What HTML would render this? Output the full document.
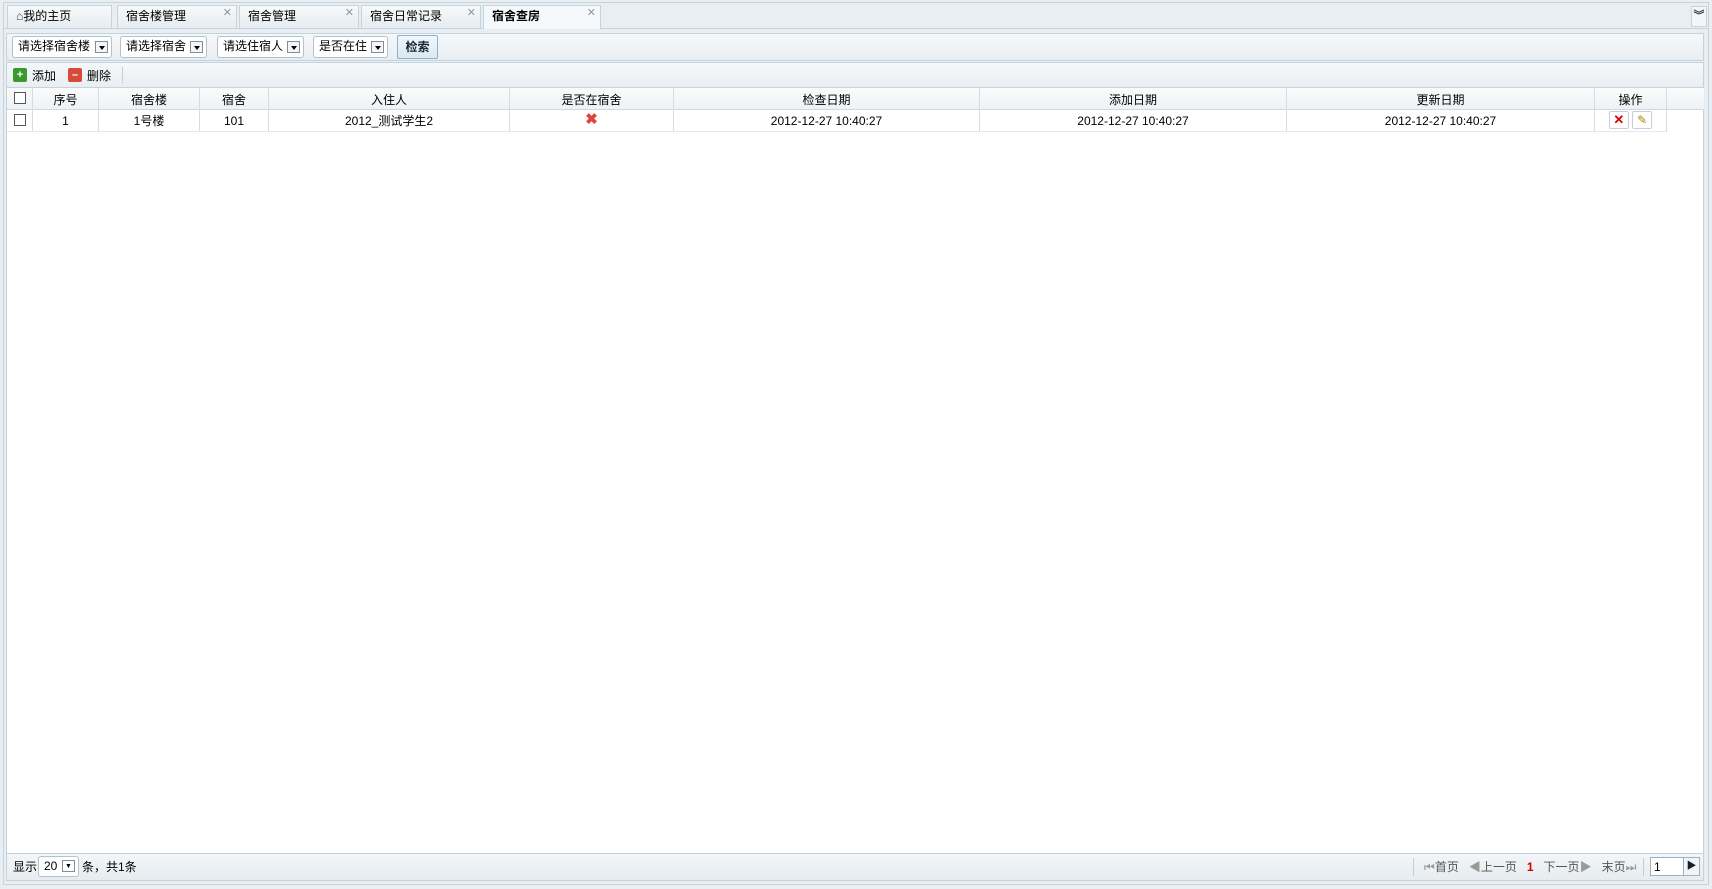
<!DOCTYPE html><html><head><meta charset="utf-8"><style>
*{margin:0;padding:0;box-sizing:border-box}
body{width:1712px;height:889px;background:#e8eef2;font-family:"Liberation Sans","Noto Sans CJK SC",sans-serif;font-size:12px;line-height:14px;color:#000;position:relative;overflow:hidden}
.a{position:absolute}
.tab{position:absolute;top:5px;height:23px;border:1px solid #c5d3dc;border-bottom:none;background:linear-gradient(#f7f9fa,#e6ecf0);padding:3px 0 0 8px;font-size:12px}
.tab .x{position:absolute;right:4px;top:0;color:#8a99a6;font-size:11px}
.sel{position:absolute;top:36px;height:22px;border:1px solid #b4c2cc;border-radius:3px;background:#fff;padding:2px 0 0 5px;font-size:12px}
.sel i{position:absolute;right:3px;top:4px;width:13px;height:12px;border:1px solid #7f8e99;background:#f4f6f7}
.sel i:after{content:"";position:absolute;left:3px;top:4px;border:3px solid transparent;border-top:4px solid #000}
.th,.td{position:absolute;text-align:center;border-right:1px solid #d5dde3;height:22px;padding-top:4px}
.th{top:88px;background:linear-gradient(#fafbfc,#eef2f5);border-bottom:1px solid #d0d9df;padding-top:5px}
.td{top:110px;background:#fff;border-bottom:1px solid #e4e9ec}
.cb{display:inline-block;width:12px;height:12px;border:1px solid #555;background:#fff}
</style></head><body>
<div class="a" style="left:3px;top:2px;width:1706px;height:883px;border:1px solid #c5d3dc;background:#e8eef2"></div>
<div class="a" style="left:4px;top:28px;width:1704px;height:1px;background:#c5d3dc"></div>
<div class="tab" style="left:7px;width:105px"><span style="color:#345">⌂</span>我的主页</div>
<div class="tab" style="left:117px;width:120px">宿舍楼管理<span class="x">✕</span></div>
<div class="tab" style="left:239px;width:120px">宿舍管理<span class="x">✕</span></div>
<div class="tab" style="left:361px;width:120px">宿舍日常记录<span class="x">✕</span></div>
<div class="tab" style="left:483px;width:118px;height:24px;background:#f6f9fb;font-weight:bold">宿舍查房<span class="x" style="font-weight:normal">✕</span></div>
<div class="a" style="left:1691px;top:6px;width:16px;height:21px;border:1px solid #c5d3dc;background:#f3f6f8;font-size:11px;font-weight:bold;text-align:center;line-height:19px;color:#223">︾</div>
<div class="a" style="left:6px;top:33px;width:1698px;height:28px;border:1px solid #c5d3dc;background:linear-gradient(#f5f8fa,#e9eef2)"></div>
<div class="sel" style="left:12px;width:100px">请选择宿舍楼<i></i></div>
<div class="sel" style="left:120px;width:87px">请选择宿舍<i></i></div>
<div class="sel" style="left:217px;width:87px">请选住宿人<i></i></div>
<div class="sel" style="left:313px;width:75px">是否在住<i></i></div>
<div class="a" style="left:397px;top:35px;width:41px;height:24px;border:1px solid #8fb0c8;border-radius:2px;background:linear-gradient(#f0f7fc,#d9e8f2);font-weight:bold;text-align:center;line-height:22px;color:#123">检索</div>
<div class="a" style="left:6px;top:62px;width:1698px;height:26px;border:1px solid #c5d3dc;background:linear-gradient(#f5f8fa,#e9eef2)"></div>
<div class="a" style="left:13px;top:68px;width:14px;height:14px;background:#3a9a2c;border-radius:2px;color:#fff;font-size:11px;line-height:14px;text-align:center;font-weight:bold">+</div>
<div class="a" style="left:32px;top:69px">添加</div>
<div class="a" style="left:68px;top:68px;width:14px;height:14px;background:#d84b3a;border-radius:2px;color:#fff;font-size:11px;line-height:14px;text-align:center;font-weight:bold">–</div>
<div class="a" style="left:87px;top:69px">删除</div>
<div class="a" style="left:122px;top:67px;width:1px;height:16px;background:#c5ccd2"></div>
<div class="a" style="left:6px;top:88px;width:1698px;height:765px;background:#fff;border-left:1px solid #c5d3dc;border-right:1px solid #c5d3dc"></div>
<div class="th" style="left:7px;width:26px;padding-top:4px"><span class="cb"></span></div>
<div class="th" style="left:33px;width:66px">序号</div>
<div class="th" style="left:99px;width:101px">宿舍楼</div>
<div class="th" style="left:200px;width:69px">宿舍</div>
<div class="th" style="left:269px;width:241px">入住人</div>
<div class="th" style="left:510px;width:164px">是否在宿舍</div>
<div class="th" style="left:674px;width:306px">检查日期</div>
<div class="th" style="left:980px;width:307px">添加日期</div>
<div class="th" style="left:1287px;width:308px">更新日期</div>
<div class="th" style="left:1595px;width:72px">操作</div>
<div class="th" style="left:1667px;width:37px;border-right:none"></div>
<div class="td" style="left:7px;width:26px;padding-top:4px"><span class="cb"></span></div>
<div class="td" style="left:33px;width:66px">1</div>
<div class="td" style="left:99px;width:101px">1号楼</div>
<div class="td" style="left:200px;width:69px">101</div>
<div class="td" style="left:269px;width:241px">2012_测试学生2</div>
<div class="td" style="left:510px;width:164px;color:#e0443a;font-weight:bold;font-size:15px;padding-top:3px">✖</div>
<div class="td" style="left:674px;width:306px">2012-12-27 10:40:27</div>
<div class="td" style="left:980px;width:307px">2012-12-27 10:40:27</div>
<div class="td" style="left:1287px;width:308px">2012-12-27 10:40:27</div>
<div class="td" style="left:1595px;width:72px;padding-top:1px"><span style="display:inline-block;width:20px;height:18px;border:1px solid #ccd;border-radius:2px;color:#d00;font-weight:bold;font-size:13px;line-height:16px">✕</span> <span style="display:inline-block;width:20px;height:18px;border:1px solid #ccd;border-radius:2px;color:#a80;font-size:12px;line-height:16px">✎</span></div>
<div class="a" style="left:6px;top:853px;width:1698px;height:28px;border:1px solid #c5d3dc;background:linear-gradient(#f3f6f8,#e6ecf0)"></div>
<div class="a" style="left:13px;top:860px">显示</div>
<div class="a" style="left:38px;top:856px;width:41px;height:21px;border:1px solid #b4c2cc;border-radius:3px;background:#fff;padding:2px 0 0 5px">20<span style="position:absolute;right:3px;top:3px;width:13px;height:12px;border:1px solid #7f8e99;font-size:7px;text-align:center;line-height:11px">▼</span></div>
<div class="a" style="left:82px;top:860px">条，共1条</div>
<div class="a" style="left:1413px;top:858px;width:1px;height:18px;background:#c5ccd2"></div>
<div class="a" style="left:1424px;top:860px;color:#555"><span style="color:#999">⏮</span>首页 &nbsp;&nbsp;<span style="color:#999">◀</span>上一页 &nbsp;&nbsp;<b style="color:#c00">1</b> &nbsp;&nbsp;下一页<span style="color:#999">▶</span> &nbsp;&nbsp;末页<span style="color:#999">⏭</span></div>
<div class="a" style="left:1643px;top:858px;width:1px;height:18px;background:#c5ccd2"></div>
<div class="a" style="left:1650px;top:857px;width:50px;height:19px;border:1px solid #a0b0bc;background:#fff;padding:2px 0 0 3px">1<span style="position:absolute;right:0;top:0;width:16px;height:17px;border-left:1px solid #a0b0bc;background:#f2f5f7;font-size:10px;text-align:center;line-height:17px;color:#123">▶</span></div>
</body></html>
